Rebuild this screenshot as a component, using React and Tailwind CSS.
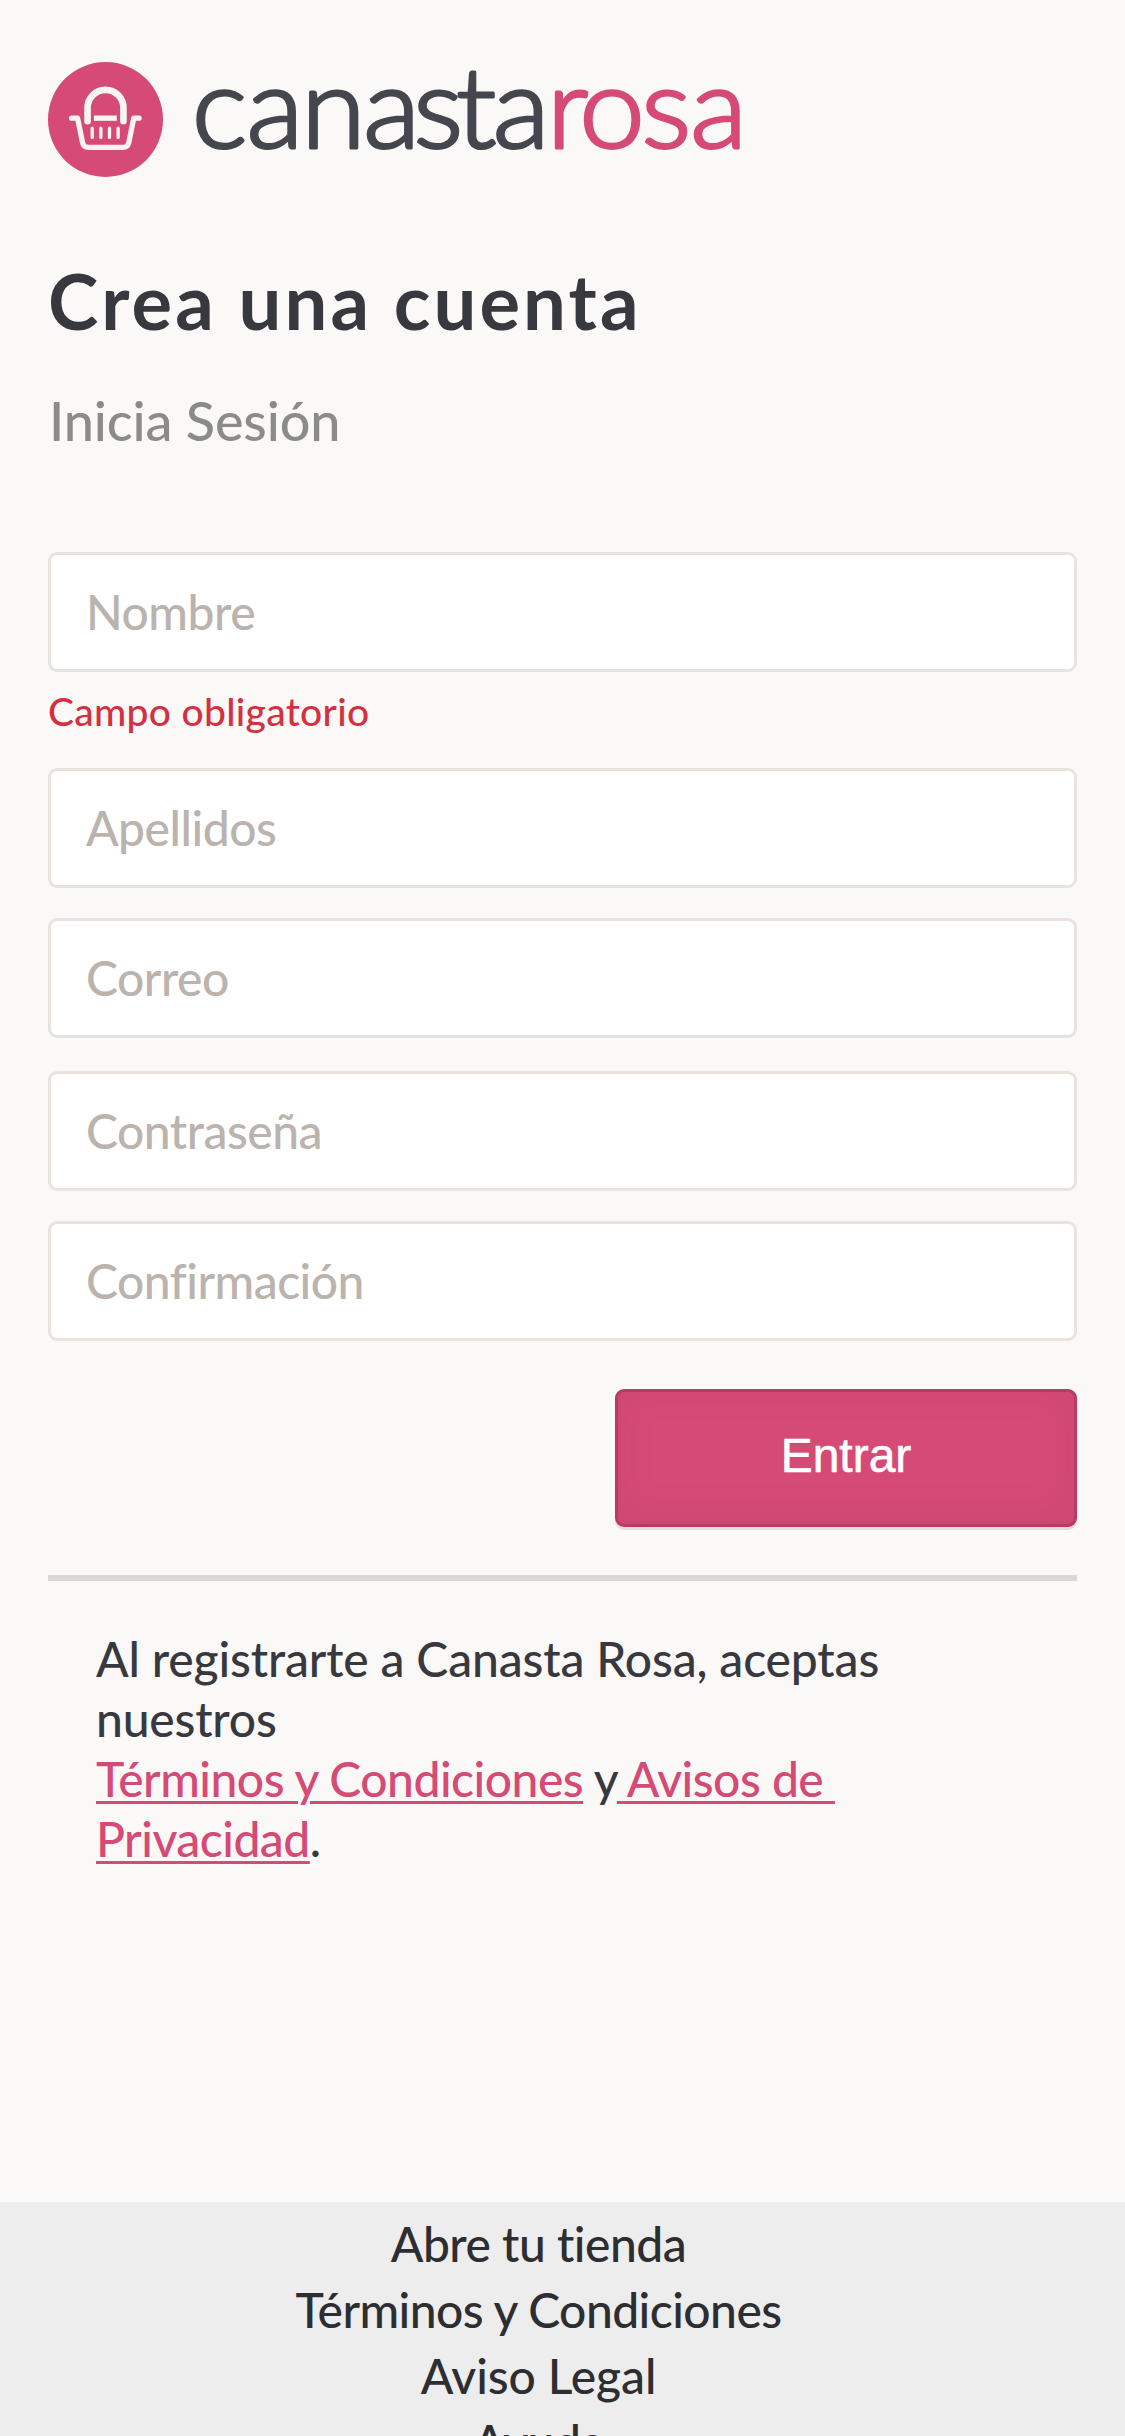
import React from "react";

function Logo() {
  return (
    <div className="flex items-center">
      <svg className="size-[115px]" viewBox="54 67 346 346" fill="none" stroke="#f8f4f3" strokeLinecap="round" strokeLinejoin="round">
        <circle cx="227" cy="240" r="173" fill="#d64a76" stroke="none" />
        <path d="M173 245V205A54 54 0 0 1 281 205V245" strokeWidth="20" />
        <path d="M192 236H261" strokeWidth="16" strokeLinecap="butt" />
        <path d="M125 236H143L158 310Q161 324 175 324H280Q294 324 297 310L312 236H328" strokeWidth="16" />
        <path d="M187 266V294M213 266V294M239 266V294M265 266V294" strokeWidth="10" />
      </svg>
      <svg className="ml-[27px] h-[115px] w-[570px] overflow-visible font-['Lato',sans-serif] text-[112px] font-light" viewBox="0 62 570 115" strokeWidth="3" strokeLinejoin="round" textAnchor="middle">
        <g transform="scale(1.05 1)">
          <text x="28 81 136.5 192 236.5 272.5 315.5" y="148" fill="#45464e" stroke="#45464e">canasta</text>
          <text x="359.5 401.9 453.5 503.5" y="148" fill="#d64a76" stroke="#d64a76">rosa</text>
        </g>
      </svg>
    </div>
  );
}

function Field({ label, className = "" }) {
  return (
    <input
      placeholder={label}
      className={`block h-[120px] w-full rounded-[9px] border-[3px] border-[#e9e3df] bg-white px-[35px] pb-[2px] text-[48px] font-medium tracking-[-0.5px] outline-none placeholder:text-[#bbb3ad] ${className}`}
    />
  );
}

const linkClass = "whitespace-pre text-[#d64a76] underline decoration-[3px] underline-offset-[4px]";

export default function App() {
  return (
    <div className="flex h-[2436px] w-[1125px] flex-col overflow-hidden bg-[#fbf9f8] font-['Lato',sans-serif] text-[#38393f] [font-variant-ligatures:none]">
      <main className="h-[2202px] px-12 pt-[62px]">
        <Logo />
        <h1 className="mt-[69px] text-[76px] leading-[110px] font-bold tracking-[3.1px]">Crea una cuenta</h1>
        <a className="mt-[29px] block pl-px text-[54px] leading-[72px] font-medium tracking-[-0.15px] text-[#8b8b8a]">Inicia Sesión</a>
        <form className="mt-[95px]">
          <Field label="Nombre" />
          <p className="mt-[9px] mb-[27px] text-[39px] leading-[60px] font-medium tracking-[0.3px] text-[#d4303f]">Campo obligatorio</p>
          <Field label="Apellidos" className="mb-[30px]" />
          <Field label="Correo" className="mb-[33px]" />
          <Field label="Contraseña" className="mb-[30px]" />
          <Field label="Confirmación" />
          <button type="button" className="mt-12 ml-auto block h-[138px] w-[462px] rounded-[9px] border-[3px] border-[#bb3a62] bg-[#d64a76] pb-[4px] font-['Liberation_Sans',sans-serif] text-[48px] text-white shadow-[0_3px_0_#e0dfde,inset_0_-6px_36px_rgba(120,60,80,0.13)] [-webkit-text-stroke:0.6px_white]">Entrar</button>
        </form>
        <hr className="mt-12 border-0 border-t-[6px] border-[#d9d8d6]" />
        <p className="mt-[48px] px-12 text-[48px] leading-[60px] font-medium tracking-[-0.5px]">
          <span className="tracking-[-0.15px]">Al registrarte a Canasta Rosa, aceptas</span><br />
          <span className="tracking-[-0.2px]">nuestros</span><br />
          <a className={linkClass}>Términos y Condiciones</a> y
          <a className={linkClass}>{" Avisos de "}<br />Privacidad</a>.
        </p>
      </main>
      <footer className="flex h-[234px] shrink-0 flex-col overflow-hidden bg-[#ededed] pt-[9px] pr-12 text-center text-[48px] leading-[66px] font-medium text-[#2d2e32]">
        <a className="tracking-[-0.5px]">Abre tu tienda</a>
        <a className="tracking-[-0.55px]">Términos y Condiciones</a>
        <a className="tracking-[-0.1px]">Aviso Legal</a>
        <a className="tracking-[-0.5px]">Ayuda</a>
      </footer>
    </div>
  );
}
